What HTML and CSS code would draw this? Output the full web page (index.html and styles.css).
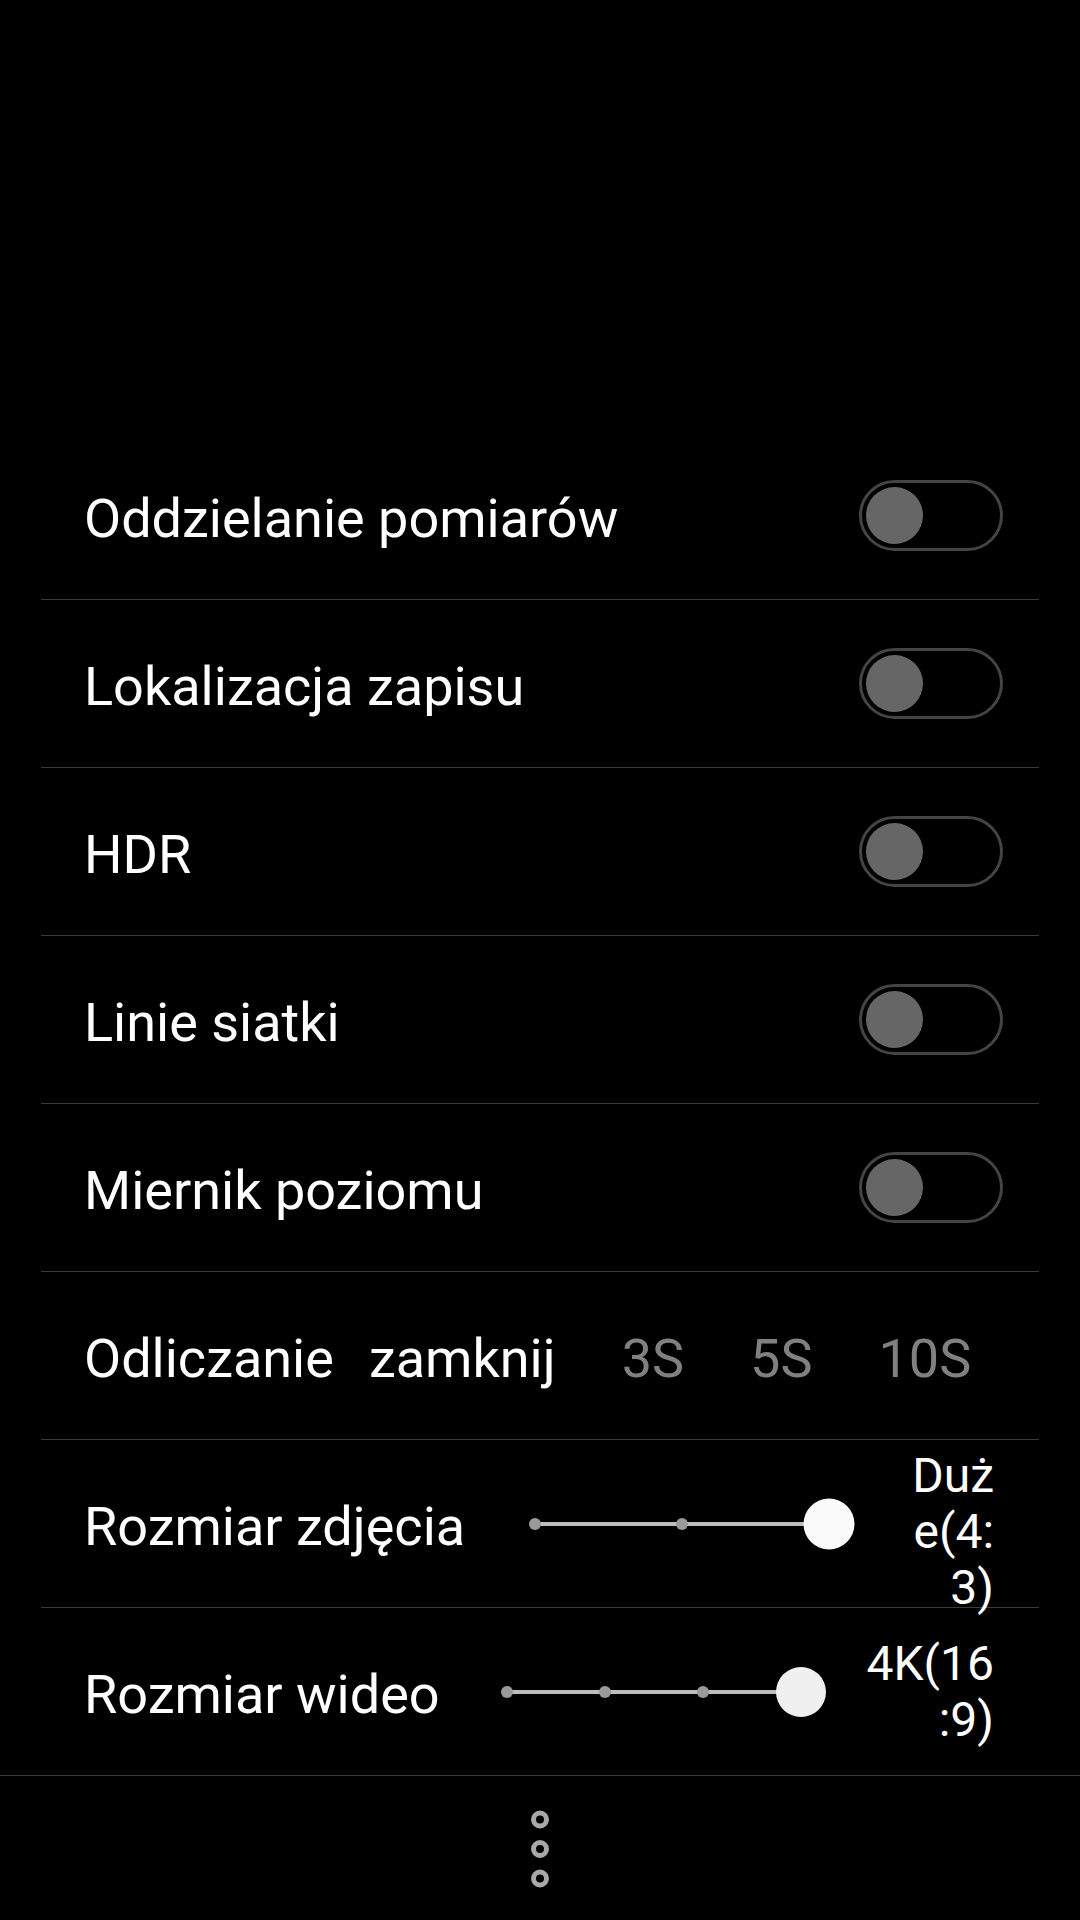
FILE: index.html
```html
<!DOCTYPE html>
<html lang="pl">
<head>
    <meta charset="UTF-8">
    <meta name="viewport" content="width=device-width, initial-scale=1.0">
    <title>Ustawienia aparatu</title>
    <link rel="stylesheet" href="styles.css">
</head>
<body>
    <div class="preview"></div>

    <div class="settings">
        <div class="row">
            <span class="label">Oddzielanie pomiarów</span>
            <div class="toggle"><div class="thumb"></div></div>
        </div>
        <div class="row">
            <span class="label">Lokalizacja zapisu</span>
            <div class="toggle"><div class="thumb"></div></div>
        </div>
        <div class="row">
            <span class="label">HDR</span>
            <div class="toggle"><div class="thumb"></div></div>
        </div>
        <div class="row">
            <span class="label">Linie siatki</span>
            <div class="toggle"><div class="thumb"></div></div>
        </div>
        <div class="row">
            <span class="label">Miernik poziomu</span>
            <div class="toggle"><div class="thumb"></div></div>
        </div>
        <div class="row">
            <span class="label">Odliczanie</span>
            <div class="options">
                <span class="option active">zamknij</span>
                <span class="option">3S</span>
                <span class="option">5S</span>
                <span class="option">10S</span>
            </div>
        </div>
        <div class="row">
            <span class="label">Rozmiar zdjęcia</span>
            <svg class="slider" width="345" height="52" viewBox="0 0 345 52">
                <line x1="25" y1="26" x2="319" y2="26" stroke="#bdbdbd" stroke-width="4"/>
                <circle cx="25" cy="26" r="6" fill="#9a9a9a"/>
                <circle cx="172" cy="26" r="6" fill="#9a9a9a"/>
                <circle cx="319" cy="26" r="25.5" fill="#fafafa"/>
            </svg>
            <span class="value photo">Duże(4:3)</span>
        </div>
        <div class="row last">
            <span class="label">Rozmiar wideo</span>
            <svg class="slider" width="345" height="52" viewBox="0 0 345 52">
                <line x1="25" y1="26" x2="319" y2="26" stroke="#bdbdbd" stroke-width="4"/>
                <circle cx="25" cy="26" r="6" fill="#9a9a9a"/>
                <circle cx="123" cy="26" r="6" fill="#9a9a9a"/>
                <circle cx="221" cy="26" r="6" fill="#9a9a9a"/>
                <circle cx="319" cy="26" r="25" fill="#f0f0f0"/>
            </svg>
            <span class="value video">4K(16<wbr>:9)</span>
        </div>
    </div>

    <div class="footer">
        <svg width="30" height="90" viewBox="0 0 30 90">
            <circle cx="15" cy="15.5" r="6.5" fill="none" stroke="#a8a8a8" stroke-width="5"/>
            <circle cx="15" cy="45" r="6.5" fill="none" stroke="#a8a8a8" stroke-width="5"/>
            <circle cx="15" cy="74.5" r="6.5" fill="none" stroke="#a8a8a8" stroke-width="5"/>
        </svg>
    </div>
</body>
</html>
```

FILE: styles.css
```css
body {
    font-family: 'Roboto', 'Noto Sans', sans-serif;
    background-color: #000;
    color: #fff;
    margin: 0;
    padding: 0;
    width: 1080px;
    height: 1920px;
    overflow: hidden;
}

.preview {
    height: 432px;
}

.settings {
    margin: 0 41px;
}

.row {
    display: flex;
    align-items: center;
    height: 167px;
    padding: 0 45px 0 43px;
    border-bottom: 1px solid #3a3a3a;
}

.row.last {
    border-bottom: none;
}

.label {
    font-size: 54px;
    padding-top: 6px;
    white-space: nowrap;
}

.toggle {
    margin-left: auto;
    margin-right: -9px;
    width: 134px;
    height: 65px;
    border: 3px solid #444;
    border-radius: 36px;
    display: flex;
    align-items: center;
    padding-left: 4px;
}

.thumb {
    width: 57px;
    height: 57px;
    border-radius: 50%;
    background-color: #666;
}

.options {
    display: flex;
    gap: 66px;
    margin-left: 35px;
    font-size: 54px;
    padding-top: 6px;
}

.option {
    color: #808080;
}

.option.active {
    color: #fff;
}

.slider {
    margin-left: auto;
    flex-shrink: 0;
}

.value {
    font-size: 48px;
    line-height: 56px;
    text-align: right;
    flex-shrink: 0;
}

.value.photo {
    width: 86px;
    margin-left: 53px;
    margin-top: 16px;
    word-break: break-all;
}

.value.video {
    width: 140px;
    margin-left: 27px;
    overflow-wrap: anywhere;
}

.footer {
    border-top: 1px solid #3a3a3a;
    height: 145px;
    display: flex;
    align-items: center;
    justify-content: center;
}
```
